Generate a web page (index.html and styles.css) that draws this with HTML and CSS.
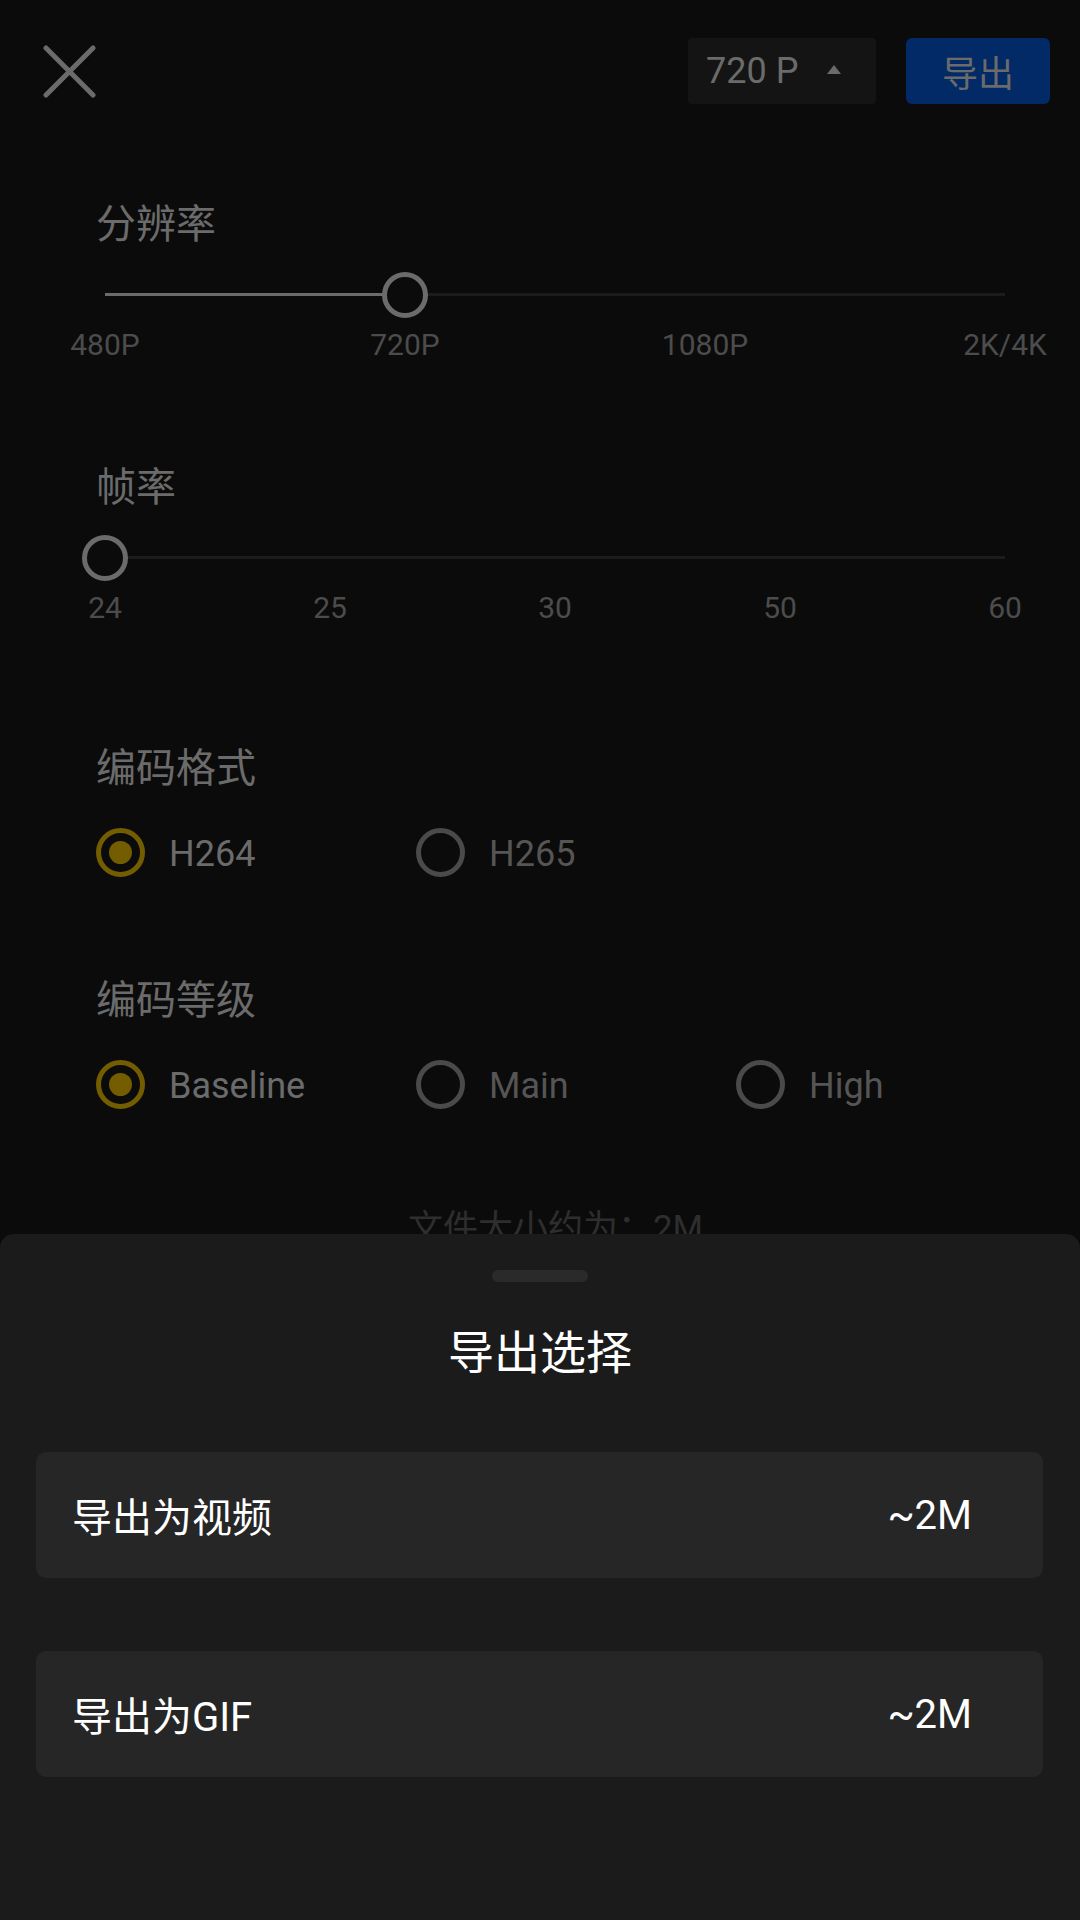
FILE: index.html
```html
<!DOCTYPE html>
<html lang="zh-CN">
<head>
    <meta charset="UTF-8">
    <meta name="viewport" content="width=device-width, initial-scale=1.0">
    <title>导出设置</title>
    <link rel="stylesheet" href="styles.css">
</head>
<body>
    <div class="screen">
        <div class="topbar">
            <button class="close-btn" aria-label="关闭">
                <svg width="53" height="53" viewBox="0 0 53 53">
                    <path d="M3 3 L50 50 M50 3 L3 50" stroke="#6b6b6b" stroke-width="5" stroke-linecap="round" fill="none"/>
                </svg>
            </button>
            <div class="top-actions">
                <div class="res-picker">
                    <span>720 P</span>
                    <i class="caret"></i>
                </div>
                <button class="export-btn">导出</button>
            </div>
        </div>

        <div class="settings">
            <div class="setting setting-resolution">
                <h2 class="setting-title">分辨率</h2>
                <div class="slider">
                    <div class="slider-track"></div>
                    <div class="slider-fill" style="width: 33.333%"></div>
                    <div class="slider-thumb" style="left: 33.333%"></div>
                </div>
                <div class="slider-ticks ticks-4">
                    <span>480P</span>
                    <span>720P</span>
                    <span>1080P</span>
                    <span>2K/4K</span>
                </div>
            </div>

            <div class="setting setting-fps">
                <h2 class="setting-title">帧率</h2>
                <div class="slider">
                    <div class="slider-track"></div>
                    <div class="slider-fill" style="width: 0%"></div>
                    <div class="slider-thumb" style="left: 0%"></div>
                </div>
                <div class="slider-ticks ticks-5">
                    <span>24</span>
                    <span>25</span>
                    <span>30</span>
                    <span>50</span>
                    <span>60</span>
                </div>
            </div>

            <div class="setting setting-codec">
                <h2 class="setting-title">编码格式</h2>
                <div class="radio-group">
                    <div class="radio checked"><span class="radio-circle"></span><span class="radio-label">H264</span></div>
                    <div class="radio"><span class="radio-circle"></span><span class="radio-label">H265</span></div>
                </div>
            </div>

            <div class="setting setting-profile">
                <h2 class="setting-title">编码等级</h2>
                <div class="radio-group">
                    <div class="radio checked"><span class="radio-circle"></span><span class="radio-label">Baseline</span></div>
                    <div class="radio"><span class="radio-circle"></span><span class="radio-label">Main</span></div>
                    <div class="radio"><span class="radio-circle"></span><span class="radio-label">High</span></div>
                </div>
            </div>

            <p class="file-size">文件大小约为：2M</p>
        </div>

        <div class="sheet">
            <div class="sheet-handle"></div>
            <h3 class="sheet-title">导出选择</h3>
            <div class="sheet-options">
                <div class="sheet-option">
                    <span>导出为视频</span>
                    <span class="option-size">~2M</span>
                </div>
                <div class="sheet-option">
                    <span>导出为GIF</span>
                    <span class="option-size">~2M</span>
                </div>
            </div>
        </div>
    </div>
</body>
</html>
```

FILE: styles.css
```css
body {
    margin: 0;
    background-color: #0b0b0b;
    font-family: Roboto, "Noto Sans CJK SC", sans-serif;
}

.screen {
    position: relative;
    width: 1080px;
    height: 1920px;
    overflow: hidden;
    background-color: #0b0b0b;
}

/* top bar */
.topbar {
    display: flex;
    justify-content: space-between;
    align-items: center;
    padding: 38px 30px 0 43px;
}

.close-btn {
    display: flex;
    padding: 0;
    border: none;
    background: none;
}

.top-actions {
    display: flex;
    gap: 30px;
}

.res-picker {
    display: flex;
    align-items: center;
    justify-content: space-between;
    box-sizing: border-box;
    width: 188px;
    height: 66px;
    padding: 0 35px 0 18px;
    background-color: #141414;
    border-radius: 4px;
    color: #6b6b6b;
    font-size: 36px;
}

.caret {
    width: 0;
    height: 0;
    border-left: 7px solid transparent;
    border-right: 7px solid transparent;
    border-bottom: 9px solid #6b6b6b;
    margin-top: -4px;
}

.export-btn {
    width: 144px;
    height: 66px;
    border: none;
    border-radius: 6px;
    background-color: #022a66;
    color: #6b6b6b;
    font-family: inherit;
    font-size: 36px;
    padding: 0;
}

/* settings */
.settings {
    padding: 0 75px 0 96px;
}

.setting-title {
    margin: 0;
    font-size: 40px;
    line-height: 40px;
    font-weight: 400;
    color: #6b6b6b;
}

.setting-resolution {
    margin-top: 101px;
}

.setting-fps {
    margin-top: 108px;
}

.setting-codec {
    margin-top: 126px;
}

.setting-profile {
    margin-top: 104px;
}

.slider {
    position: relative;
    height: 46px;
    margin: 27px 0 0 9px;
}

.slider-track,
.slider-fill {
    position: absolute;
    left: 0;
    top: 21px;
    height: 3px;
}

.slider-track {
    right: 0;
    background-color: #1c1c1c;
}

.slider-fill {
    background-color: #6b6b6b;
}

.slider-thumb {
    position: absolute;
    top: 0;
    box-sizing: border-box;
    width: 46px;
    height: 46px;
    margin-left: -23px;
    border: 5px solid #6b6b6b;
    border-radius: 50%;
    background-color: #0b0b0b;
}

.slider-ticks {
    display: grid;
    margin-top: 12px;
    font-size: 30px;
    line-height: 30px;
    color: #4c4c4c;
    text-align: center;
}

.ticks-4 {
    grid-template-columns: repeat(4, 300px);
    margin-left: -141px;
}

.ticks-5 {
    grid-template-columns: repeat(5, 225px);
    margin-left: -103.5px;
}

.radio-group {
    display: grid;
    grid-template-columns: repeat(3, 320px);
    margin-top: 39px;
}

.radio {
    display: flex;
    align-items: center;
    gap: 24px;
}

.radio-circle {
    display: flex;
    align-items: center;
    justify-content: center;
    box-sizing: border-box;
    width: 49px;
    height: 49px;
    border: 5px solid #4a4a4a;
    border-radius: 50%;
}

.radio-label {
    padding-top: 3px;
    font-size: 36px;
    color: #555;
}

.radio.checked .radio-circle {
    border-color: #735d00;
}

.radio.checked .radio-circle::after {
    content: "";
    width: 23px;
    height: 23px;
    border-radius: 50%;
    background-color: #735d00;
}

.radio.checked .radio-label {
    color: #6b6b6b;
}

.file-size {
    margin: 102px 0 0;
    padding-left: 10px;
    text-align: center;
    font-size: 35px;
    line-height: 35px;
    color: #2e2e2e;
}

/* bottom sheet */
.sheet {
    position: absolute;
    left: 0;
    right: 0;
    top: 1234px;
    bottom: 0;
    display: flex;
    flex-direction: column;
    align-items: center;
    background-color: #1b1b1b;
    border-radius: 14px 14px 0 0;
}

.sheet-handle {
    width: 96px;
    height: 12px;
    margin-top: 36px;
    border-radius: 6px;
    background-color: #2a2a2a;
}

.sheet-title {
    margin: 48px 0 0;
    font-size: 46px;
    line-height: 46px;
    font-weight: 400;
    color: #fff;
}

.sheet-options {
    display: flex;
    flex-direction: column;
    gap: 73px;
    align-self: stretch;
    margin: 76px 37px 0 36px;
}

.sheet-option {
    display: flex;
    justify-content: space-between;
    align-items: center;
    height: 126px;
    padding: 0 71px 0 36px;
    border-radius: 10px;
    background-color: #262626;
    color: #fff;
    font-size: 40px;
}
```
